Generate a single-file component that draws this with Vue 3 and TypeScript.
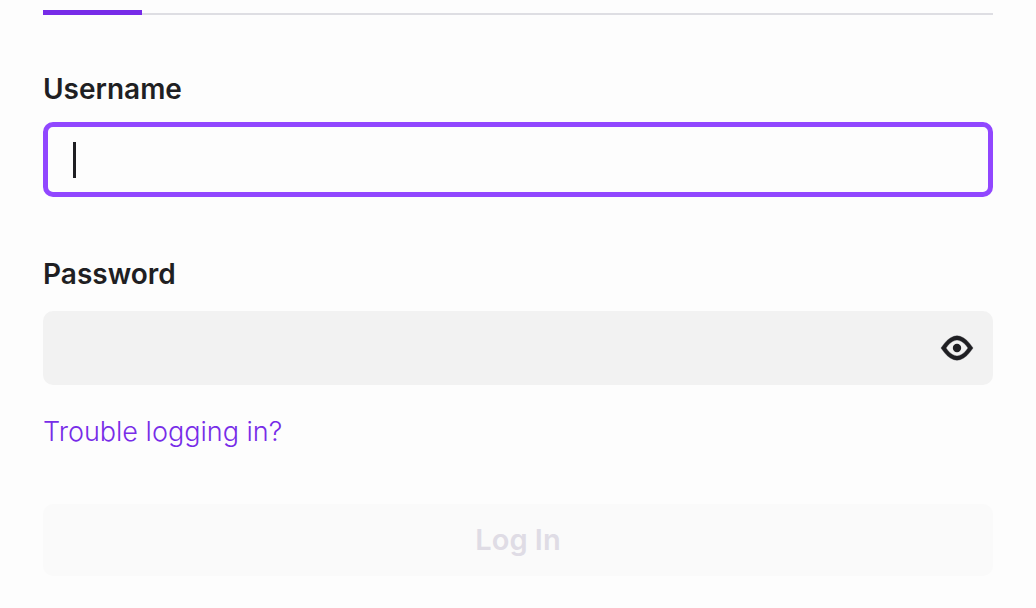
<script setup lang="ts">
import { ref } from 'vue'

const username = ref('')
const password = ref('')
const passwordVisible = ref(false)
</script>

<template>
  <main class="login">
    <div class="tab-track"><div class="tab-active"></div></div>

    <form class="form" @submit.prevent>
      <div class="field">
        <label class="label" for="username">Username</label>
        <div class="control focused">
          <input id="username" v-model="username" class="input" type="text" autocomplete="off" />
          <span v-if="!username" class="caret"></span>
        </div>
      </div>

      <div class="field">
        <label class="label" for="password">Password</label>
        <div class="control filled">
          <input
            id="password"
            v-model="password"
            class="input"
            :type="passwordVisible ? 'text' : 'password'"
            autocomplete="off"
          />
          <button
            class="reveal"
            type="button"
            aria-label="Show password"
            @click="passwordVisible = !passwordVisible"
          >
            <svg viewBox="0 0 20 20" width="40" height="40" fill="currentColor" aria-hidden="true">
              <circle cx="10" cy="10" r="2.1" />
              <path
                stroke="currentColor"
                stroke-width="0.2"
                fill-rule="evenodd"
                d="M16.175 7.567L18 10l-1.825 2.433a9.992 9.992 0 01-2.855 2.575l-.232.14a6 6 0 01-6.175 0l-.233-.14a9.992 9.992 0 01-2.855-2.575L2 10l1.825-2.433A9.992 9.992 0 016.68 4.992l.233-.14a6 6 0 016.175 0l.232.14a9.992 9.992 0 012.855 2.575zm-1.6 3.666a7.99 7.99 0 01-2.28 2.058l-.24.144a4 4 0 01-4.11 0l-.239-.144a7.994 7.994 0 01-2.28-2.058L4.5 10l.925-1.233a7.992 7.992 0 012.28-2.058l.24-.144a4 4 0 014.11 0l.239.144a7.996 7.996 0 012.28 2.058L15.5 10l-.925 1.233z"
              />
            </svg>
          </button>
        </div>
      </div>

      <a class="help" href="#">Trouble logging in?</a>

      <button class="submit" type="submit" disabled>Log In</button>
    </form>
  </main>
</template>

<style>
body {
  background: #fdfdfd;
}
</style>

<style scoped>
.login {
  padding: 10px 43px 32px;
  font-family: Inter, "Liberation Sans", sans-serif;
  color: #1f1f23;
}

.tab-track {
  height: 5px;
  background: linear-gradient(#dedee3, #dedee3) bottom / 100% 2px no-repeat;
}

.tab-active {
  width: 99px;
  height: 5px;
  background: #772ce8;
}

.form {
  display: flex;
  flex-direction: column;
  align-items: stretch;
  padding-top: 56px;
}

.field {
  display: flex;
  flex-direction: column;
  gap: 15px;
  margin-bottom: 59px;
}

.field + .field {
  gap: 19px;
  margin-bottom: 29px;
}

.label {
  align-self: flex-start;
  font-size: 28px;
  font-weight: 600;
  line-height: 36px;
}

.control {
  position: relative;
  display: flex;
  align-items: center;
  box-sizing: border-box;
  height: 75px;
  border: 5px solid transparent;
  border-radius: 10px;
}

.focused {
  border-color: #9147ff;
}

.filled {
  height: 74px;
  padding-right: 11px;
  border-color: #f2f2f2;
  background: #f2f2f2;
}

.input {
  flex: 1;
  min-width: 0;
  padding: 0 25px;
  border: 0;
  outline: 0;
  background: transparent;
  color: inherit;
  font: inherit;
  font-size: 28px;
  line-height: 36px;
}

.caret {
  position: absolute;
  top: 15px;
  left: 25px;
  width: 3px;
  height: 36px;
  background: #1f1f23;
  pointer-events: none;
}

.reveal {
  display: flex;
  padding: 0;
  border: 0;
  background: transparent;
  color: #1f1f23;
}

.help {
  align-self: flex-start;
  color: #772ce8;
  font-size: 27px;
  font-weight: 300;
  line-height: 36px;
  text-decoration: none;
}

.submit {
  height: 72px;
  margin-top: 54px;
  padding: 0;
  border: 0;
  border-radius: 10px;
  background: #fafafa;
  color: #dfdce5;
  font-family: inherit;
  font-size: 29px;
  font-weight: 600;
  line-height: 36px;
}
</style>
